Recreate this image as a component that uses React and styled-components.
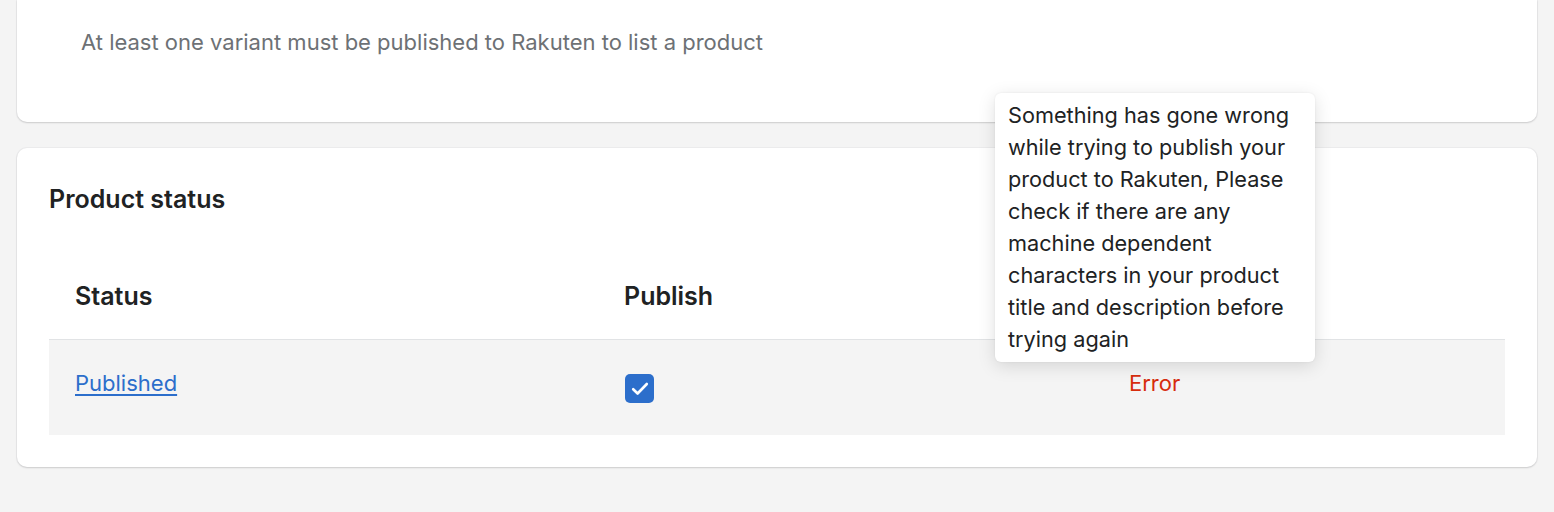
import styled, { createGlobalStyle } from "styled-components";

const GlobalStyle = createGlobalStyle`
  body {
    margin: 0;
    background: #f4f4f4;
    font-family: Inter, "Noto Sans", sans-serif;
    color: #202223;
  }
`;

const Page = styled.div`
  position: relative;
  padding: 0 17px 40px;
  display: flex;
  flex-direction: column;
  gap: 26px;
`;

const Card = styled.section`
  background: #fff;
  border-radius: ${(p) => (p.$cutTop ? "0 0 10px 10px" : "10px")};
  box-shadow: 0 1px 2px rgba(0, 0, 0, 0.14), 0 0 0 1px rgba(63, 63, 68, 0.04);
  padding: ${(p) => p.$pad};
`;

const Hint = styled.p`
  margin: 0;
  font-size: 22px;
  line-height: 28px;
  color: #6d7175;
`;

const Title = styled.h2`
  margin: 0;
  font-size: 25px;
  line-height: 28px;
  font-weight: 600;
`;

const Table = styled.div`
  margin-top: 24px;
  display: grid;
  grid-template-columns: 549px 505px 1fr;
`;

const HeadCell = styled.div`
  height: 103px;
  box-sizing: border-box;
  display: flex;
  align-items: flex-end;
  padding: 0 0 29px 26px;
  font-size: 25px;
  line-height: 28px;
  font-weight: 600;
  border-bottom: 1px solid #e1e3e5;
`;

const Cell = styled.div`
  height: 95px;
  box-sizing: border-box;
  background: #f4f4f4;
  padding: ${(p) => (p.$check ? "34px" : "29px")} 0 0 26px;
  font-size: 22px;
  line-height: 28px;
  color: ${(p) => p.$color || "#202223"};
`;

const StatusLink = styled.a`
  color: #2c6ecb;
  text-decoration: underline;
  text-underline-offset: 3px;
  cursor: pointer;
`;

const CheckBox = styled.span`
  display: inline-flex;
  align-items: center;
  justify-content: center;
  width: 29px;
  height: 29px;
  margin-left: 1px;
  border-radius: 5px;
  background: #2c6ecb;
`;

const Tooltip = styled.div`
  position: absolute;
  left: 995px;
  top: 93px;
  width: 320px;
  box-sizing: border-box;
  padding: 6px 13px 7px;
  background: #fff;
  border-radius: 6px;
  box-shadow: 0 4px 18px rgba(0, 0, 0, 0.13), 0 0 2px rgba(0, 0, 0, 0.08);
  font-size: 21.7px;
  line-height: 32px;
  color: #202223;
`;

export default function App() {
  return (
    <>
      <GlobalStyle />
      <Page>
        <Card $cutTop $pad="28px 64px 66px">
          <Hint>At least one variant must be published to Rakuten to list a product</Hint>
        </Card>
        <Card $pad="37px 32px 32px">
          <Title>Product status</Title>
          <Table>
            <HeadCell>Status</HeadCell>
            <HeadCell>Publish</HeadCell>
            <HeadCell />
            <Cell>
              <StatusLink>Published</StatusLink>
            </Cell>
            <Cell $check>
              <CheckBox>
                <svg width="18" height="16" viewBox="0 0 18 16" fill="none">
                  <path d="M2.2 8.2l4.4 4.3L15.8 3" stroke="#fff" strokeWidth="2.6" strokeLinecap="round" strokeLinejoin="round" />
                </svg>
              </CheckBox>
            </Cell>
            <Cell $color="#d72c0d">Error</Cell>
          </Table>
        </Card>
        <Tooltip>
          Something has gone wrong while trying to publish your product to Rakuten, Please check if there are any machine dependent characters in your product title and description before trying again
        </Tooltip>
      </Page>
    </>
  );
}
